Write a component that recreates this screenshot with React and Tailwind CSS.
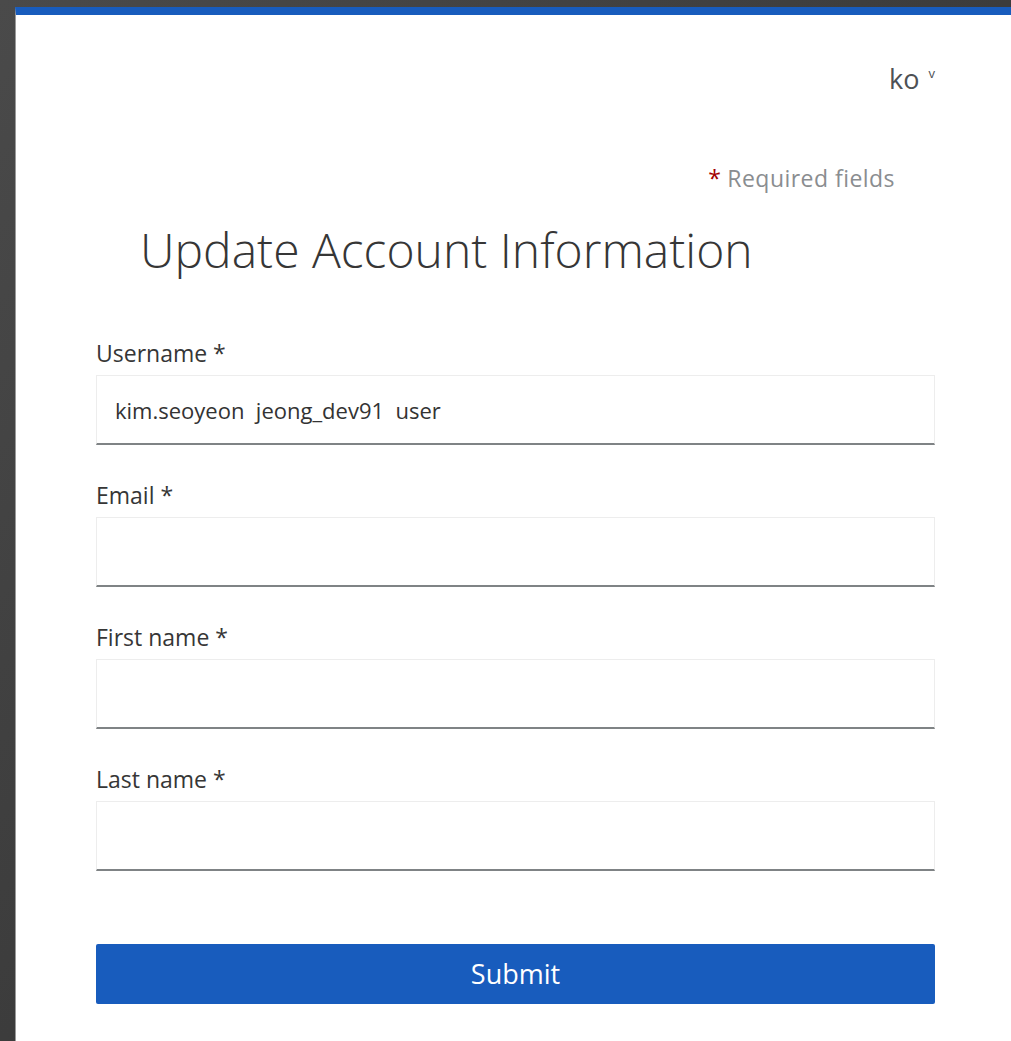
import React from 'react';

const fields = [
  { id: 'username', label: 'Username', value: 'kim.seoyeon  jeong_dev91  user' },
  { id: 'email', label: 'Email', value: '' },
  { id: 'firstName', label: 'First name', value: '' },
  { id: 'lastName', label: 'Last name', value: '' },
];

export default function App() {
  return (
    <div className="min-h-screen bg-gradient-to-br from-[#4a4a4a] via-[#3c3c3c] to-[#2f2f2f] pt-[7px] pl-[15px] font-['Open_Sans',sans-serif]">
      <div className="min-h-[1034px] bg-white border-t-[8px] border-[#185cbd] border-l border-l-[#9a9a9a] pl-[80px] pr-[76px]">
        {/* Locale */}
        <div className="flex justify-end pt-[50px]">
          <button className="flex items-start text-[27px] leading-none text-[#4d5155]">
            <span>ko</span>
            <span className="ml-[9px] mt-[2px] text-[13px] leading-none">v</span>
          </button>
        </div>

        {/* Header */}
        <div className="flex justify-end pr-[40px] mt-[75px]">
          <span className="text-[23px] leading-none tracking-[0.02em] text-[#8a8d90]">
            <span className="text-[#a30000] mr-[6px]">*</span>Required fields
          </span>
        </div>
        <h1 className="mt-[36px] pl-[44px] text-[48px] leading-none font-light text-[#363636]">
          Update Account Information
        </h1>

        {/* Form */}
        <form className="mt-[68px] flex flex-col">
          {fields.map((f) => (
            <div key={f.id} className="mb-[39px]">
              <label htmlFor={f.id} className="block text-[23px] leading-none text-[#363636] mb-[10px]">
                {f.label} *
              </label>
              <input
                id={f.id}
                defaultValue={f.value}
                className="block w-full h-[70px] border border-[#ededed] border-b-2 border-b-[#7f8385] px-[18px] text-[22px] text-[#333333] outline-none"
              />
            </div>
          ))}
          <button
            type="button"
            className="mt-[34px] h-[60px] w-full rounded-[2px] bg-[#185cbd] text-[27px] text-white"
          >
            Submit
          </button>
        </form>
      </div>
    </div>
  );
}
